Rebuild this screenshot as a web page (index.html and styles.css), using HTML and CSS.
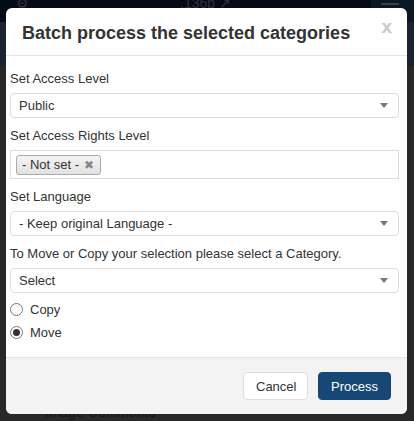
FILE: index.html
```html
<!DOCTYPE html>
<html>
<head>
<meta charset="utf-8">
<link rel="stylesheet" href="styles.css">
</head>
<body>
<div class="page">
  <div class="topbar">
    <span class="gear">⚙</span>
    <span class="version">.136b ↗</span>
    <span class="menu"><span class="menu-line"></span></span>
  </div>
  <div class="subbar"></div>
  <div class="behind-text">Image Comments</div>
</div>

<div class="modal">
  <div class="modal-header">
    <h3 class="modal-title">Batch process the selected categories</h3>
    <span class="close">x</span>
  </div>
  <div class="modal-body">
    <div class="field">
      <div class="label">Set Access Level</div>
      <div class="select"><span>Public</span><span class="caret"></span></div>
    </div>
    <div class="field">
      <div class="label">Set Access Rights Level</div>
      <div class="multi"><span class="tag">- Not set - <span class="tag-x">✖</span></span></div>
    </div>
    <div class="field">
      <div class="label">Set Language</div>
      <div class="select"><span>- Keep original Language -</span><span class="caret"></span></div>
    </div>
    <div class="field">
      <div class="label">To Move or Copy your selection please select a Category.</div>
      <div class="select"><span>Select</span><span class="caret"></span></div>
    </div>
    <div class="radios">
      <div class="radio"><span class="circle"></span><span>Copy</span></div>
      <div class="radio"><span class="circle checked"></span><span>Move</span></div>
    </div>
  </div>
  <div class="modal-footer">
    <button class="btn btn-default">Cancel</button>
    <button class="btn btn-primary">Process</button>
  </div>
</div>
</body>
</html>
```

FILE: styles.css
```css
html, body {
  margin: 0;
  padding: 0;
}
body {
  width: 414px;
  height: 421px;
  overflow: hidden;
  background: #282828;
  font-family: "Liberation Sans", Arial, sans-serif;
  position: relative;
}
.page {
  height: 421px;
  display: flex;
  flex-direction: column;
}
.topbar {
  height: 22px;
  background: #050b15;
  position: relative;
  display: flex;
}
.gear {
  position: absolute;
  left: 16px;
  top: -5px;
  color: #2f3540;
  font-size: 14px;
}
.version {
  position: absolute;
  left: 180px;
  top: -5px;
  color: #2c323b;
  font-size: 14px;
}
.menu {
  position: absolute;
  right: 0;
  top: 0;
  width: 43px;
  height: 22px;
  background: #0b1722;
}
.menu-line {
  position: absolute;
  left: 10px;
  top: 3px;
  width: 18px;
  height: 2px;
  background: #3a4048;
}
.subbar {
  height: 44px;
  background: #1a2430;
}
.behind-text {
  position: absolute;
  left: 45px;
  top: 404px;
  color: #161616;
  font-size: 14px;
}

.modal {
  position: absolute;
  left: 6px;
  top: 8px;
  width: 401px;
  height: 406px;
  background: #fff;
  border-radius: 6px;
  overflow: hidden;
  display: flex;
  flex-direction: column;
  color: #333;
}
.modal-header {
  border-bottom: 1px solid #e5e5e5;
  display: flex;
  align-items: center;
  justify-content: space-between;
  padding: 0 15px 0 16px;
  box-sizing: border-box;
  height: 49px;
}
.modal-title {
  margin: 0;
  font-size: 18px;
  font-weight: bold;
  color: #333;
  line-height: 24px;
  position: relative;
  top: 1px;
}
.close {
  color: #c8c8c8;
  font-weight: bold;
  font-size: 19px;
  line-height: 20px;
  position: relative;
  top: -5px;
}
.modal-body {
  padding: 14px 8px 13px 4px;
  font-size: 13px;
  flex: 1;
  display: flex;
  flex-direction: column;
}
.field {
  display: flex;
  flex-direction: column;
  margin-bottom: 9px;
}
.label {
  line-height: 18px;
  margin-bottom: 5px;
  color: #333;
}
.select {
  height: 25px;
  box-sizing: border-box;
  border: 1px solid #ddd;
  border-radius: 4px;
  display: flex;
  align-items: center;
  justify-content: space-between;
  padding: 0 9px 0 8px;
  color: #333;
}
.caret {
  width: 0;
  height: 0;
  border-left: 4px solid transparent;
  border-right: 4px solid transparent;
  border-top: 5px solid #777;
  margin-right: 1px;
}
.multi {
  height: 29px;
  box-sizing: border-box;
  border: 1px solid #ddd;
  display: flex;
  align-items: center;
  padding: 0 5px;
}
.tag {
  height: 20px;
  box-sizing: border-box;
  border: 1px solid #aaa;
  border-radius: 3px;
  background: linear-gradient(#f4f4f4, #e2e2e2);
  display: flex;
  align-items: center;
  padding: 0 6px 0 5px;
  color: #333;
  font-size: 13px;
  gap: 5px;
}
.tag-x {
  color: #888;
  font-size: 12px;
}
.radios {
  margin-top: -4px;
  display: flex;
  flex-direction: column;
}
.radio {
  height: 23px;
  display: flex;
  align-items: center;
  gap: 7px;
  padding-left: 0;
}
.circle {
  width: 13px;
  height: 13px;
  box-sizing: border-box;
  border: 1px solid #767676;
  border-radius: 50%;
  background: #fff;
  display: flex;
  align-items: center;
  justify-content: center;
}
.circle.checked::after {
  content: "";
  width: 7px;
  height: 7px;
  border-radius: 50%;
  background: #333;
}
.modal-footer {
  height: 57px;
  box-sizing: border-box;
  border-top: 1px solid #e5e5e5;
  background: #f3f3f3;
  display: flex;
  justify-content: flex-end;
  align-items: flex-start;
  padding: 14px 16px 0 0;
  gap: 10px;
}
.btn {
  height: 28px;
  font-family: "Liberation Sans", Arial, sans-serif;
  font-size: 13px;
  border-radius: 4px;
  padding: 0 12px;
  cursor: pointer;
}
.btn-default {
  width: 65px;
  background: #fff;
  border: 1px solid #ddd;
  color: #333;
}
.btn-primary {
  width: 73px;
  background: #174777;
  border: 1px solid #174777;
  color: #fff;
}
```
